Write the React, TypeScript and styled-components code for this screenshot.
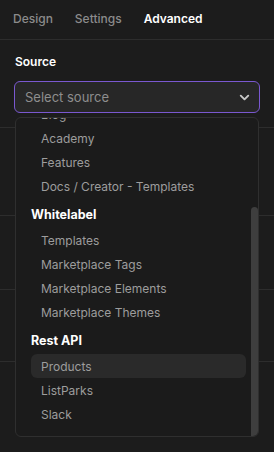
import { useLayoutEffect, useRef, useState } from "react";
import styled, { createGlobalStyle } from "styled-components";

const GlobalStyle = createGlobalStyle`
  html, body {
    margin: 0;
    padding: 0;
    background: #1c1c1c;
  }
  body {
    font-family: Inter, "Noto Sans", sans-serif;
    -webkit-font-smoothing: antialiased;
  }
  * { box-sizing: border-box; }
`;

const Panel = styled.div`
  width: 274px;
  height: 452px;
  background: #1c1c1c;
  overflow: hidden;
`;

const Tabs = styled.div`
  display: flex;
  gap: 22px;
  height: 40px;
  padding: 0 13px 3px;
  align-items: center;
  border-bottom: 1px solid #2d2d2d;
`;

const Tab = styled.span<{ $active?: boolean }>`
  font-size: 12px;
  font-weight: ${(p) => (p.$active ? 600 : 500)};
  color: ${(p) => (p.$active ? "#ffffff" : "#8b8b8b")};
`;

const Section = styled.div<{ $height: number }>`
  height: ${(p) => p.$height}px;
  border-bottom: 1px solid #2d2d2d;
`;

const SourceSection = styled.div`
  padding: 14px 14px 14px 14px;
  border-bottom: 1px solid #2d2d2d;
`;

const Label = styled.div`
  font-size: 12px;
  font-weight: 600;
  color: #ffffff;
  padding-left: 1px;
  margin-bottom: 12px;
`;

const SelectWrap = styled.div`
  position: relative;
`;

const SelectBox = styled.div`
  display: flex;
  align-items: center;
  justify-content: space-between;
  height: 32px;
  padding: 0 7px 0 10px;
  background: #272727;
  border: 1px solid #7a58d0;
  border-radius: 6px;
  font-size: 13px;
  color: #8e8e8e;
`;

const Menu = styled.div`
  position: absolute;
  top: 36px;
  left: 1px;
  width: 244px;
  height: 320px;
  background: #1b1b1b;
  border: 1px solid #2f2f2f;
  border-radius: 6px;
  z-index: 5;
  overflow: hidden;
`;

const MenuScroll = styled.div`
  height: 100%;
  overflow: hidden;
  padding: 6px 12px 10px 15px;
`;

const Thumb = styled.div`
  position: absolute;
  right: 0;
  width: 7px;
  background: #3e3e3e;
  border-radius: 4px 4px 0 0;
`;

const GroupHeader = styled.div`
  height: 30px;
  padding-top: 7px;
  line-height: 20px;
  font-size: 12.5px;
  font-weight: 700;
  color: #ffffff;
`;

const Item = styled.div<{ $active?: boolean }>`
  height: 24px;
  line-height: 25px;
  padding-left: 10px;
  border-radius: 6px;
  font-size: 12px;
  color: #9d9d9d;
  background: ${(p) => (p.$active ? "#2a2a2a" : "transparent")};
`;

const Chevron = () => (
  <svg width="15" height="15" viewBox="0 0 24 24" fill="none" stroke="#c9c9c9" strokeWidth="3" strokeLinecap="round" strokeLinejoin="round">
    <path d="M6 9l6 6 6-6" />
  </svg>
);

const groups = [
  { title: "Collections", items: ["Pages", "Posts", "Authors", "Blog", "Academy", "Features", "Docs / Creator - Templates"] },
  { title: "Whitelabel", items: ["Templates", "Marketplace Tags", "Marketplace Elements", "Marketplace Themes"] },
  { title: "Rest API", items: ["Products", "ListParks", "Slack"] },
];

export default function App() {
  const scrollRef = useRef<HTMLDivElement>(null);
  const [thumb, setThumb] = useState({ top: 0, height: 0 });

  useLayoutEffect(() => {
    const el = scrollRef.current;
    if (!el) return;
    el.scrollTop = el.scrollHeight;
    const h = el.clientHeight;
    const total = el.scrollHeight;
    const height = (h * h) / total;
    setThumb({ top: (el.scrollTop / total) * h, height });
  }, []);

  return (
    <>
      <GlobalStyle />
      <Panel>
        <Tabs>
          <Tab>Design</Tab>
          <Tab>Settings</Tab>
          <Tab $active>Advanced</Tab>
        </Tabs>
        <SourceSection>
          <Label>Source</Label>
          <SelectWrap>
            <SelectBox>
              <span>Select source</span>
              <Chevron />
            </SelectBox>
            <Menu>
              <MenuScroll ref={scrollRef}>
                {groups.map((g) => (
                  <div key={g.title}>
                    <GroupHeader>{g.title}</GroupHeader>
                    {g.items.map((it) => (
                      <Item key={it} $active={it === "Products"}>
                        {it}
                      </Item>
                    ))}
                  </div>
                ))}
              </MenuScroll>
              <Thumb style={{ top: thumb.top, height: thumb.height }} />
            </Menu>
          </SelectWrap>
        </SourceSection>
        <Section $height={88} />
        <Section $height={74} />
        <Section $height={72} />
      </Panel>
    </>
  );
}
